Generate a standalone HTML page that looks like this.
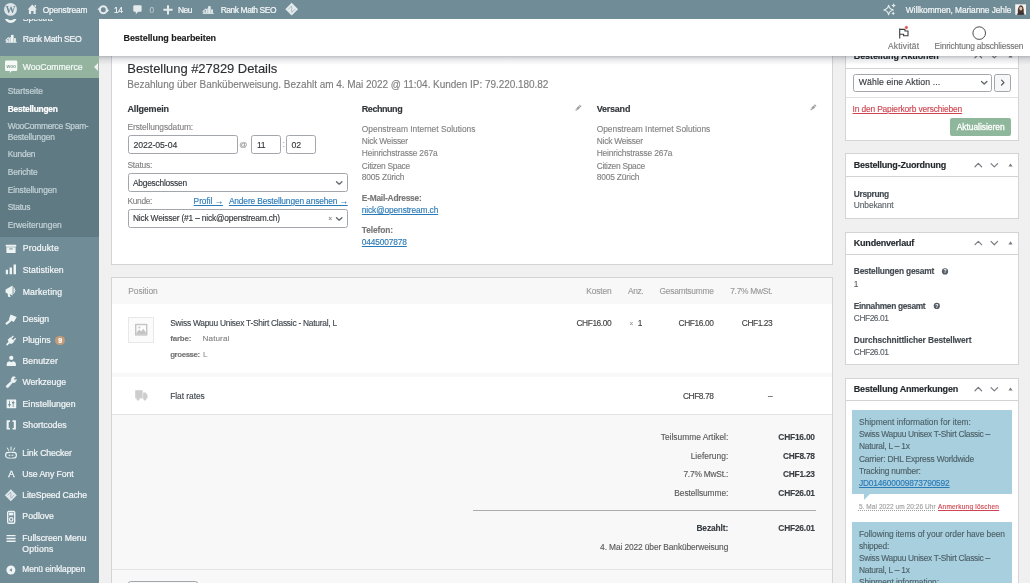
<!DOCTYPE html>
<html lang="de">
<head>
<meta charset="utf-8">
<title>Bestellung bearbeiten ‹ Openstream — WordPress</title>
<style>
*{box-sizing:border-box;margin:0;padding:0}
html,body{width:1030px;height:583px;overflow:hidden}
body{position:relative;background:#f0f0f1;font-family:"Liberation Sans","DejaVu Sans",sans-serif;font-size:8px}
.t{position:absolute;white-space:nowrap;line-height:1;display:block;-webkit-text-stroke:.13px currentColor}
.a{position:absolute;display:block}
#content{position:absolute;left:0;top:0;width:1030px;height:583px;overflow:hidden;z-index:1;will-change:transform}
#sidebar{position:absolute;left:0;top:0;width:99px;height:583px;background:#708c97;overflow:hidden;z-index:2;will-change:transform}
#header{position:absolute;left:99px;top:19px;width:931px;height:37px;background:#fff;z-index:3;box-shadow:0 1px 2px rgba(20,30,40,.10)}
#hshadow{position:absolute;left:99px;top:56px;width:931px;height:9px;z-index:3;background:linear-gradient(rgba(25,35,50,.21),rgba(25,35,50,.09) 45%,rgba(25,35,50,0));pointer-events:none}
#adminbar{position:absolute;left:0;top:0;width:1030px;height:19px;background:#708c97;z-index:4}
#header .t,#header .a{margin-left:-99px;margin-top:-19px}
.panel{position:absolute;background:#fff;border:1px solid #d3d4d6}
.box{position:absolute;background:#fff;border:1px solid #d3d4d6}
.box .hb{position:absolute;left:0;right:0;height:1px;background:#d2d3d5}
.inp{position:absolute;background:#fff;border:1px solid #a3a6aa;border-radius:2.5px}
svg{position:absolute;overflow:visible}
#sidebar .t,#adminbar .t{-webkit-text-stroke:.22px currentColor}
</style>
</head>
<body>

<div id="content">
  <!-- order data panel -->
  <div class="panel" style="left:111px;top:40px;width:722px;height:224.5px"></div>
  <!-- form controls -->
  <div class="inp" style="left:127.5px;top:135.4px;width:110px;height:18.6px"></div>
  <div class="inp" style="left:251px;top:135.4px;width:29.5px;height:18.6px"></div>
  <div class="inp" style="left:286.2px;top:135.4px;width:30.3px;height:18.6px"></div>
  <div class="inp" style="left:127.5px;top:173.2px;width:220.2px;height:18.6px"></div>
  <div class="inp" style="left:127.5px;top:209.2px;width:220.2px;height:18.6px"></div>

  <!-- order items panel -->
  <div class="panel" style="left:111px;top:277px;width:722px;height:320px;background:#f8f8f8"></div>
  <div class="a" style="left:112px;top:304px;width:720px;height:68.5px;background:#fff"></div>
  <div class="a" style="left:112px;top:377px;width:720px;height:37px;background:#fff"></div>
  <div class="a" style="left:112px;top:414px;width:720px;height:1px;background:#e3e3e3"></div>
  <div class="a" style="left:112px;top:568.5px;width:720px;height:1px;background:#e3e3e3"></div>
  <div class="a" style="left:473px;top:509.6px;width:343px;height:1px;background:#ababab"></div>
  <div class="a" style="left:128.4px;top:581px;width:69.4px;height:18px;border:1px solid #a3a6aa;border-radius:2.5px;background:#f6f7f7"></div>
  <!-- thumbnail -->
  <div class="a" style="left:128.3px;top:317px;width:25.8px;height:25.8px;border:1px solid #e8e8e8;background:#fbfbfb"></div>

  <!-- right column boxes -->
  <div class="box" style="left:845.2px;top:45.3px;width:173.4px;height:95.6px">
    <div class="hb" style="top:22px"></div>
    <div class="hb" style="top:50.5px;background:#e2e2e2"></div>
  </div>
  <div class="inp" style="left:852.8px;top:73.6px;width:139px;height:18px"></div>
  <div class="inp" style="left:994.3px;top:73.6px;width:17px;height:18px;background:#f6f7f7"></div>
  <div class="a" style="left:949.5px;top:118px;width:61.8px;height:17.8px;border-radius:2px;background:#8fb79c"></div>

  <div class="box" style="left:845.2px;top:153.4px;width:173.4px;height:65.4px"><div class="hb" style="top:22px"></div></div>
  <div class="box" style="left:845.2px;top:231.8px;width:173.4px;height:133.2px"><div class="hb" style="top:21.5px"></div></div>
  <div class="box" style="left:845.2px;top:378px;width:173.4px;height:220px"><div class="hb" style="top:21.2px"></div></div>
  <!-- notes -->
  <div class="a" style="left:852.3px;top:410px;width:159.5px;height:84.2px;background:#a8cfde"></div>
  <div class="a" style="left:864px;top:494.2px;width:0;height:0;border-top:6px solid #a8cfde;border-right:6px solid transparent"></div>
  <div class="a" style="left:852.3px;top:522.4px;width:159.5px;height:70px;background:#a8cfde"></div>

<svg class="a" style="left:0;top:0" width="1030" height="583" viewBox="0 0 1030 583"><g transform="translate(578.2 108) rotate(45)" fill="#9d9d9d"><rect x="-1.15" y="-3.5" width="2.3" height="1.3"/><rect x="-1.15" y="-1.7" width="2.3" height="3.4"/><path d="M-1.15 2.1 H1.15 L0 3.9Z"/></g><g transform="translate(813.2 107.6) rotate(45)" fill="#9d9d9d"><rect x="-1.15" y="-3.5" width="2.3" height="1.3"/><rect x="-1.15" y="-1.7" width="2.3" height="3.4"/><path d="M-1.15 2.1 H1.15 L0 3.9Z"/></g><path d="M336.50 181.65 L339.20 184.15 L341.90 181.65" fill="none" stroke="#62686e" stroke-width="1.35" stroke-linecap="round" stroke-linejoin="round"/><path d="M336.50 217.65 L339.20 220.15 L341.90 217.65" fill="none" stroke="#62686e" stroke-width="1.35" stroke-linecap="round" stroke-linejoin="round"/><path d="M981.50 81.55 L984.20 84.05 L986.90 81.55" fill="none" stroke="#62686e" stroke-width="1.35" stroke-linecap="round" stroke-linejoin="round"/><path d="M1001.6 80.2 L1004 82.6 L1001.6 85" fill="none" stroke="#50575e" stroke-width="1.2" stroke-linecap="round" stroke-linejoin="round"/><path d="M975.00 57.75 L978.30 54.45 L981.60 57.75" fill="none" stroke="#787c82" stroke-width="1.2" stroke-linecap="round" stroke-linejoin="round"/><path d="M991.00 54.55 L994.30 57.85 L997.60 54.55" fill="none" stroke="#787c82" stroke-width="1.2" stroke-linecap="round" stroke-linejoin="round"/><path d="M1008.4 57.6 L1010.5 54.4 L1012.6 57.6Z" fill="#787c82"/><path d="M975.00 166.75 L978.30 163.45 L981.60 166.75" fill="none" stroke="#787c82" stroke-width="1.2" stroke-linecap="round" stroke-linejoin="round"/><path d="M991.00 163.55 L994.30 166.85 L997.60 163.55" fill="none" stroke="#787c82" stroke-width="1.2" stroke-linecap="round" stroke-linejoin="round"/><path d="M1008.4 166.6 L1010.5 163.4 L1012.6 166.6Z" fill="#787c82"/><path d="M975.00 244.65 L978.30 241.35 L981.60 244.65" fill="none" stroke="#787c82" stroke-width="1.2" stroke-linecap="round" stroke-linejoin="round"/><path d="M991.00 241.45 L994.30 244.75 L997.60 241.45" fill="none" stroke="#787c82" stroke-width="1.2" stroke-linecap="round" stroke-linejoin="round"/><path d="M1008.4 244.5 L1010.5 241.3 L1012.6 244.5Z" fill="#787c82"/><path d="M975.00 390.75 L978.30 387.45 L981.60 390.75" fill="none" stroke="#787c82" stroke-width="1.2" stroke-linecap="round" stroke-linejoin="round"/><path d="M991.00 387.55 L994.30 390.85 L997.60 387.55" fill="none" stroke="#787c82" stroke-width="1.2" stroke-linecap="round" stroke-linejoin="round"/><path d="M1008.4 390.6 L1010.5 387.4 L1012.6 390.6Z" fill="#787c82"/><circle cx="945" cy="271.4" r="3.1" fill="#555d66"/><text x="945" y="273.29999999999995" text-anchor="middle" font-family="Liberation Sans,sans-serif" font-weight="700" font-size="5.2" fill="#fff">?</text><circle cx="936.8" cy="305.9" r="3.1" fill="#555d66"/><text x="936.8" y="307.79999999999995" text-anchor="middle" font-family="Liberation Sans,sans-serif" font-weight="700" font-size="5.2" fill="#fff">?</text><rect x="135.7" y="324.5" width="11" height="10.4" fill="none" stroke="#c4c4c4" stroke-width="1.4"/><path d="M136.6 334 V332.4 L139.3 329.4 L141.2 331.4 L143.2 328.8 L145.9 332.4 V334Z" fill="#c4c4c4"/><circle cx="139.3" cy="327.4" r="1" fill="#c4c4c4"/><g fill="#cdcdcd"><rect x="135.2" y="390.2" width="7.4" height="8.2"/><path d="M143.1 392.4 H145.6 L147.5 395 V398.4 H143.1Z"/><circle cx="138" cy="398.9" r="1.5"/><circle cx="144.9" cy="398.9" r="1.5"/></g></svg>
<span class="t" style="top:62px;font-size:13px;color:#2b2f33;letter-spacing:-0.043px;left:127.30px;">Bestellung #27829 Details</span>
<span class="t" style="top:80px;font-size:10px;color:#7d7d7d;letter-spacing:-0.042px;left:127.30px;">Bezahlung über Banküberweisung. Bezahlt am 4. Mai 2022 @ 11:04. Kunden IP: 79.220.180.82</span>
<span class="t" style="top:105px;font-size:9px;color:#33373b;font-weight:700;letter-spacing:-0.180px;left:127.50px;">Allgemein</span>
<span class="t" style="top:123px;font-size:8.4px;color:#838383;letter-spacing:-0.085px;left:127.50px;">Erstellungsdatum:</span>
<span class="t" style="top:141px;font-size:8.7px;color:#33373b;letter-spacing:-0.065px;left:133.40px;">2022-05-04</span>
<span class="t" style="top:141px;font-size:7.9px;color:#909090;left:239.20px;">@</span>
<span class="t" style="top:141px;font-size:8.7px;color:#33373b;letter-spacing:-0.416px;left:256.90px;">11</span>
<span class="t" style="top:140px;font-size:8.4px;color:#a6a6a6;left:282.40px;">:</span>
<span class="t" style="top:141px;font-size:8.7px;color:#33373b;letter-spacing:-0.186px;left:291.60px;">02</span>
<span class="t" style="top:161px;font-size:8.4px;color:#838383;letter-spacing:-0.225px;left:127.50px;">Status:</span>
<span class="t" style="top:179px;font-size:8.4px;color:#33373b;letter-spacing:-0.216px;left:132.90px;">Abgeschlossen</span>
<span class="t" style="top:197px;font-size:8.4px;color:#838383;letter-spacing:-0.341px;left:127.50px;">Kunde:</span>
<span class="t" style="top:197px;font-size:8.4px;color:#2a7ab8;text-decoration:underline;letter-spacing:-0.050px;left:193.60px;">Profil →</span>
<span class="t" style="top:197px;font-size:8.4px;color:#2a7ab8;text-decoration:underline;letter-spacing:-0.143px;left:228.90px;">Andere Bestellungen ansehen →</span>
<span class="t" style="top:214px;font-size:8.4px;color:#33373b;letter-spacing:-0.188px;left:132.90px;">Nick Weisser (#1 – nick@openstream.ch)</span>
<span class="t" style="top:215px;font-size:7px;color:#8a8a8a;left:328.20px;">×</span>
<span class="t" style="top:105px;font-size:9px;color:#33373b;font-weight:700;letter-spacing:-0.450px;left:361.80px;">Rechnung</span>
<span class="t" style="top:105px;font-size:9px;color:#33373b;font-weight:700;letter-spacing:-0.219px;left:596.70px;">Versand</span>
<span class="t" style="top:125px;font-size:8.4px;color:#838383;left:361.80px;">Openstream Internet Solutions</span>
<span class="t" style="top:137px;font-size:8.4px;color:#838383;letter-spacing:-0.218px;left:361.80px;">Nick Weisser</span>
<span class="t" style="top:149px;font-size:8.4px;color:#838383;letter-spacing:-0.154px;left:361.80px;">Heinrichstrasse 267a</span>
<span class="t" style="top:162px;font-size:8.4px;color:#838383;letter-spacing:-0.276px;left:361.80px;">Citizen Space</span>
<span class="t" style="top:173px;font-size:8.4px;color:#838383;letter-spacing:-0.158px;left:361.80px;">8005 Zürich</span>
<span class="t" style="top:125px;font-size:8.4px;color:#838383;left:596.70px;">Openstream Internet Solutions</span>
<span class="t" style="top:137px;font-size:8.4px;color:#838383;letter-spacing:-0.218px;left:596.70px;">Nick Weisser</span>
<span class="t" style="top:149px;font-size:8.4px;color:#838383;letter-spacing:-0.154px;left:596.70px;">Heinrichstrasse 267a</span>
<span class="t" style="top:162px;font-size:8.4px;color:#838383;letter-spacing:-0.276px;left:596.70px;">Citizen Space</span>
<span class="t" style="top:173px;font-size:8.4px;color:#838383;letter-spacing:-0.158px;left:596.70px;">8005 Zürich</span>
<span class="t" style="top:194px;font-size:8.4px;color:#777;font-weight:700;letter-spacing:-0.240px;left:361.80px;">E-Mail-Adresse:</span>
<span class="t" style="top:206px;font-size:8.4px;color:#2a7ab8;text-decoration:underline;letter-spacing:-0.133px;left:361.80px;">nick@openstream.ch</span>
<span class="t" style="top:226px;font-size:8.4px;color:#777;font-weight:700;letter-spacing:-0.094px;left:361.80px;">Telefon:</span>
<span class="t" style="top:238px;font-size:8.4px;color:#2a7ab8;text-decoration:underline;letter-spacing:-0.158px;left:361.80px;">0445007878</span>
<span class="t" style="top:287px;font-size:8.4px;color:#9a9a9a;letter-spacing:-0.062px;left:128.30px;">Position</span>
<span class="t" style="top:287px;font-size:8.4px;color:#9a9a9a;letter-spacing:-0.146px;right:418.55px;">Kosten</span>
<span class="t" style="top:287px;font-size:8.4px;color:#9a9a9a;letter-spacing:-0.391px;left:628.00px;">Anz.</span>
<span class="t" style="top:287px;font-size:8.4px;color:#9a9a9a;letter-spacing:-0.253px;right:316.45px;">Gesamtsumme</span>
<span class="t" style="top:287px;font-size:8.4px;color:#9a9a9a;letter-spacing:-0.249px;right:257.65px;">7.7% MwSt.</span>
<span class="t" style="top:319px;font-size:8.4px;color:#3f464c;letter-spacing:-0.246px;left:170.20px;">Swiss Wapuu Unisex T-Shirt Classic - Natural, L</span>
<span class="t" style="top:335px;font-size:7.9px;color:#767676;font-weight:700;letter-spacing:-0.140px;left:170.20px;">farbe:</span>
<span class="t" style="top:335px;font-size:8.1px;color:#858585;letter-spacing:0.101px;left:202.60px;">Natural</span>
<span class="t" style="top:351px;font-size:7.9px;color:#767676;font-weight:700;letter-spacing:-0.413px;left:170.20px;">groesse:</span>
<span class="t" style="top:351px;font-size:8.1px;color:#999;left:202.90px;">L</span>
<span class="t" style="top:319px;font-size:8.4px;color:#444;letter-spacing:-0.434px;right:418.83px;">CHF16.00</span>
<span class="t" style="top:321px;font-size:6.5px;color:#999;left:629.60px;">×</span>
<span class="t" style="top:319px;font-size:8.4px;color:#444;left:637.80px;">1</span>
<span class="t" style="top:319px;font-size:8.4px;color:#444;letter-spacing:-0.421px;right:316.62px;">CHF16.00</span>
<span class="t" style="top:319px;font-size:8.4px;color:#444;letter-spacing:-0.450px;right:257.85px;">CHF1.23</span>
<span class="t" style="top:392px;font-size:8.4px;color:#3f464c;letter-spacing:-0.042px;left:170.20px;">Flat rates</span>
<span class="t" style="top:392px;font-size:8.4px;color:#444;letter-spacing:-0.450px;right:316.65px;">CHF8.78</span>
<span class="t" style="top:392px;font-size:8.4px;color:#666;right:257.40px;">–</span>
<span class="t" style="top:433px;font-size:8.4px;color:#5a5a5a;letter-spacing:0.006px;right:301.69px;">Teilsumme Artikel:</span>
<span class="t" style="top:452px;font-size:8.4px;color:#5a5a5a;letter-spacing:0.045px;right:301.66px;">Lieferung:</span>
<span class="t" style="top:470px;font-size:8.4px;color:#5a5a5a;letter-spacing:-0.211px;right:301.91px;">7.7% MwSt.:</span>
<span class="t" style="top:489px;font-size:8.4px;color:#5a5a5a;letter-spacing:-0.079px;right:301.78px;">Bestellsumme:</span>
<span class="t" style="top:524px;font-size:8.4px;color:#3a3f44;font-weight:700;letter-spacing:-0.097px;right:301.80px;">Bezahlt:</span>
<span class="t" style="top:543px;font-size:8.4px;color:#5a5a5a;letter-spacing:-0.115px;right:301.81px;">4. Mai 2022 über Banküberweisung</span>
<span class="t" style="top:433px;font-size:8.4px;color:#3a3f44;font-weight:700;letter-spacing:-0.209px;right:215.21px;">CHF16.00</span>
<span class="t" style="top:452px;font-size:8.4px;color:#3a3f44;font-weight:700;letter-spacing:-0.245px;right:215.25px;">CHF8.78</span>
<span class="t" style="top:470px;font-size:8.4px;color:#3a3f44;font-weight:700;letter-spacing:-0.245px;right:215.25px;">CHF1.23</span>
<span class="t" style="top:489px;font-size:8.4px;color:#3a3f44;font-weight:700;letter-spacing:-0.209px;right:215.21px;">CHF26.01</span>
<span class="t" style="top:524px;font-size:8.4px;color:#3a3f44;font-weight:700;letter-spacing:-0.209px;right:215.21px;">CHF26.01</span>
<span class="t" style="top:52px;font-size:9px;color:#23282d;font-weight:700;letter-spacing:-0.089px;left:853.80px;">Bestellung Aktionen</span>
<span class="t" style="top:78px;font-size:8.7px;color:#33373b;letter-spacing:0.114px;left:858.70px;">Wähle eine Aktion ...</span>
<span class="t" style="top:105px;font-size:8.4px;color:#cf4450;text-decoration:underline;letter-spacing:-0.138px;left:852.50px;">In den Papierkorb verschieben</span>
<span class="t" style="top:123px;font-size:8.4px;color:#ffffff;letter-spacing:-0.004px;left:956.70px;-webkit-text-stroke:.3px #fff;">Aktualisieren</span>
<span class="t" style="top:161px;font-size:9px;color:#23282d;font-weight:700;letter-spacing:-0.215px;left:853.80px;">Bestellung-Zuordnung</span>
<span class="t" style="top:190px;font-size:8.4px;color:#444b52;font-weight:700;letter-spacing:-0.336px;left:853.80px;">Ursprung</span>
<span class="t" style="top:201px;font-size:8.4px;color:#5b6269;letter-spacing:-0.091px;left:853.80px;">Unbekannt</span>
<span class="t" style="top:239px;font-size:9px;color:#23282d;font-weight:700;letter-spacing:-0.217px;left:853.80px;">Kundenverlauf</span>
<span class="t" style="top:267px;font-size:8.4px;color:#444b52;font-weight:700;letter-spacing:-0.208px;left:853.80px;">Bestellungen gesamt</span>
<span class="t" style="top:280px;font-size:8.4px;color:#5b6269;left:853.80px;">1</span>
<span class="t" style="top:302px;font-size:8.4px;color:#444b52;font-weight:700;letter-spacing:-0.331px;left:853.80px;">Einnahmen gesamt</span>
<span class="t" style="top:314px;font-size:8.4px;color:#5b6269;letter-spacing:-0.450px;left:853.80px;">CHF26.01</span>
<span class="t" style="top:336px;font-size:8.4px;color:#444b52;font-weight:700;letter-spacing:-0.114px;left:853.80px;">Durchschnittlicher Bestellwert</span>
<span class="t" style="top:348px;font-size:8.4px;color:#5b6269;letter-spacing:-0.450px;left:853.80px;">CHF26.01</span>
<span class="t" style="top:385px;font-size:9px;color:#23282d;font-weight:700;letter-spacing:-0.204px;left:853.80px;">Bestellung Anmerkungen</span>
<span class="t" style="top:418px;font-size:8.4px;color:#4d6068;letter-spacing:0.009px;left:858.90px;">Shipment information for item:</span>
<span class="t" style="top:430px;font-size:8.4px;color:#4d6068;letter-spacing:-0.294px;left:858.90px;">Swiss Wapuu Unisex T-Shirt Classic –</span>
<span class="t" style="top:442px;font-size:8.4px;color:#4d6068;letter-spacing:-0.224px;left:858.90px;">Natural, L – 1x</span>
<span class="t" style="top:455px;font-size:8.4px;color:#4d6068;letter-spacing:-0.182px;left:858.90px;">Carrier: DHL Express Worldwide</span>
<span class="t" style="top:467px;font-size:8.4px;color:#4d6068;letter-spacing:-0.191px;left:858.90px;">Tracking number:</span>
<span class="t" style="top:479px;font-size:8.4px;color:#2a7ab8;text-decoration:underline;letter-spacing:-0.169px;left:858.90px;">JD014600009873790592</span>
<span class="t" style="top:504px;font-size:6.5px;color:#a0a0a0;letter-spacing:0.073px;left:858.90px;text-decoration:underline dotted;">5. Mai 2022 um 20:26 Uhr</span>
<span class="t" style="top:504px;font-size:6.5px;color:#cf4450;text-decoration:underline;letter-spacing:0.220px;left:938.00px;">Anmerkung löschen</span>
<span class="t" style="top:530px;font-size:8.4px;color:#4d6068;letter-spacing:-0.076px;left:858.90px;">Following items of your order have been</span>
<span class="t" style="top:542px;font-size:8.4px;color:#4d6068;letter-spacing:-0.159px;left:858.90px;">shipped:</span>
<span class="t" style="top:554px;font-size:8.4px;color:#4d6068;letter-spacing:-0.294px;left:858.90px;">Swiss Wapuu Unisex T-Shirt Classic –</span>
<span class="t" style="top:566px;font-size:8.4px;color:#4d6068;letter-spacing:-0.224px;left:858.90px;">Natural, L – 1x</span>
<span class="t" style="top:578px;font-size:8.4px;color:#4d6068;letter-spacing:-0.070px;left:858.90px;">Shipment information:</span>
</div>

<div id="sidebar">
  <div class="a" style="left:0;top:56.2px;width:99px;height:21.6px;background:#95b4a0"></div>
  <div class="a" style="left:0;top:77.8px;width:99px;height:159.2px;background:#5f7a83"></div>
  <div class="a" style="left:94.4px;top:62.8px;width:0;height:0;border-right:4.7px solid #f0f0f1;border-top:4.7px solid transparent;border-bottom:4.7px solid transparent"></div>
  <div class="a" style="left:55.4px;top:335.6px;width:9.2px;height:9.2px;border-radius:5px;background:#c39b78"></div>
<svg class="a" style="left:0;top:0" width="1030" height="583" viewBox="0 0 1030 583"><circle cx="10.7" cy="16.6" r="5" fill="none" stroke="#eef3f4" stroke-width="2.6"/><g fill="#eef3f4"><rect x="6.10" y="39.90" width="2.1" height="2.4" opacity=".85"/><rect x="8.50" y="38.40" width="2.2" height="3.9" opacity=".9"/><rect x="11.00" y="34.90" width="2.6" height="7.4"/><rect x="13.90" y="38.10" width="2.0" height="4.2" opacity=".9"/><path d="M5.30 39.90 L8.30 37.10 L9.70 38.00 L11.00 36.50 V37.90 L9.80 39.30 L8.40 38.40 L5.70 40.90Z" opacity=".9"/><rect x="5.50" y="41.80" width="11.3" height="0.95" opacity=".8"/></g><path d="M6.3 60.5 H16 Q17.3 60.5 17.3 61.8 V69.7 Q17.3 71 16 71 H11.8 L9.6 72.9 L9.9 71 H6.3 Q5 71 5 69.7 V61.8 Q5 60.5 6.3 60.5Z" fill="#f5faf6"/><text x="11.15" y="67.6" text-anchor="middle" font-family="Liberation Sans,sans-serif" font-weight="700" font-size="5" fill="#8aa596" letter-spacing="-.2">woo</text><path d="M5.8 244.7 H16.2 V246.7 H5.8Z M6.4 247.3 H15.6 V252.9 H6.4Z" fill="#eef3f4"/><rect x="9.2" y="248.5" width="3.6" height=".9" fill="#708c97"/><path d="M5.8 269.8 h2.2 v4.4 h-2.2z M9.6 267.4 h2.4 v6.8 h-2.4z M13.5 264.6 h2.5 v9.6 h-2.5z" fill="#eef3f4"/><path d="M5.6 289.4 L12.6 285.6 V295.4 L9.6 293.9 L10.6 297 H8.4 L7.4 293.2 L5.6 292.8Z" fill="#eef3f4"/><path d="M13.6 287.4 Q16.4 290.5 13.6 293.6" fill="none" stroke="#eef3f4" stroke-width="1"/><path d="M13.4 289.3 Q14.4 290.5 13.4 291.7" fill="none" stroke="#eef3f4" stroke-width=".9"/><path d="M10.6 314.6 L16.7 317.1 L13.8 322 L8.8 319.6Z" fill="#eef3f4"/><path d="M10.2 320.6 L6.6 323.6" stroke="#eef3f4" stroke-width="2.2" stroke-linecap="round"/><g transform="translate(11 340.7) rotate(-45)" fill="#eef3f4"><path d="M-1 -2.9 H2 V2.9 H-1 Q-3.2 1.6 -3.2 0 Q-3.2 -1.6 -1 -2.9Z"/><rect x="2" y="-2.3" width="2.9" height="1.4"/><rect x="2" y="0.9" width="2.9" height="1.4"/><rect x="-6.2" y="-0.85" width="3.6" height="1.7" rx=".6"/></g><circle cx="11.3" cy="357.9" r="2.15" fill="#eef3f4"/><path d="M6.7 366.1 V363.8 Q6.9 361.6 9.5 361.2 L11.3 362.2 L13.1 361.2 Q15.7 361.6 15.9 363.8 V366.1Z" fill="#eef3f4"/><g transform="translate(11.2 382.1) scale(.9) translate(-11.5 -382.3)"><path d="M13.4 376.4 Q15 376 16.2 376.8 L14.4 378.6 L14.8 380 L16.2 380.4 L17 379 Q17.4 381.2 15.8 382.4 Q14.6 383.2 13 382.8 L8.4 388 Q7.2 388.9 6.3 388 Q5.5 387.1 6.4 386 L11.6 381.4 Q11.2 379.6 12 378 Q12.6 376.8 13.4 376.4Z" fill="#eef3f4" stroke="#eef3f4" stroke-width=".7" stroke-linejoin="round"/></g><rect x="6.6" y="399.4" width="9.6" height="8.9" rx=".6" fill="#eef3f4"/><path d="M9.5 400.8 V407 M13.2 400.8 V407" stroke="#708c97" stroke-width=".8"/><rect x="8.3" y="404" width="2.4" height="1.4" fill="#708c97"/><rect x="12" y="402" width="2.4" height="1.4" fill="#708c97"/><path d="M6.6 420.3 H10 V421.9 H8.7 V428 H10 V429.6 H6.6Z M15.9 420.3 H12.5 V421.9 H13.8 V428 H12.5 V429.6 H15.9Z" fill="#eef3f4"/><rect x="5.6" y="452.4" width="10.8" height="5.6" rx="2.8" fill="none" stroke="#eef3f4" stroke-width="1.2"/><path d="M8.6 455.2 H13.4" stroke="#eef3f4" stroke-width="1.1"/><path d="M11 452.4 V458" stroke="#708c97" stroke-width="1.2"/><path d="M11 447 V450 M7.4 448 L8.6 450.4 M14.6 448 L13.4 450.4" stroke="#eef3f4" stroke-width="1" stroke-linecap="round"/><text x="11.3" y="477" text-anchor="middle" font-family="Liberation Sans,sans-serif" font-size="9.4" fill="#eef3f4" stroke="#eef3f4" stroke-width=".35">A</text><path d="M10.8 489.2 L16.8 495.2 L10.8 501.2 L4.800000000000001 495.2Z" fill="#dfe7ea"/><path d="M7.50 495.40 L10.60 492.20 L11.10 495.30 M14.10 495.00 L11.00 498.20 L10.50 495.10" fill="none" stroke="#708c97" stroke-width=".85" stroke-linejoin="round" opacity=".55"/><rect x="7.7" y="511.4" width="7" height="11.8" rx="1.2" fill="none" stroke="#eef3f4" stroke-width="1.4"/><rect x="9" y="512.6" width="4.4" height="2.8" fill="#eef3f4"/><circle cx="11.2" cy="519.4" r="1.7" fill="none" stroke="#eef3f4" stroke-width="1.2"/><path d="M6.5 535.6 H15.6 M6.5 538.4 H15.6 M6.5 541.2 H15.6" stroke="#eef3f4" stroke-width="1.45"/><circle cx="10.9" cy="570" r="4.5" fill="#eef3f4"/><path d="M11.9 568.3 V571.7 L9.4 570Z" fill="#708c97"/></svg>
<span class="t" style="top:14px;font-size:8.7px;color:#f3f6f7;left:22.70px;">Spectra</span>
<span class="t" style="top:35px;font-size:8.7px;color:#f3f6f7;letter-spacing:-0.306px;left:22.70px;">Rank Math SEO</span>
<span class="t" style="top:63px;font-size:8.7px;color:#f4faf6;letter-spacing:-0.026px;left:22.70px;">WooCommerce</span>
<span class="t" style="top:87px;font-size:8.4px;color:#c3d2d7;letter-spacing:-0.019px;left:7.70px;">Startseite</span>
<span class="t" style="top:105px;font-size:8.4px;color:#ffffff;font-weight:700;letter-spacing:-0.216px;left:7.70px;">Bestellungen</span>
<span class="t" style="top:122px;font-size:8.4px;color:#c3d2d7;letter-spacing:-0.254px;left:7.70px;">WooCommerce Spam-</span>
<span class="t" style="top:133px;font-size:8.4px;color:#c3d2d7;letter-spacing:-0.111px;left:7.70px;">Bestellungen</span>
<span class="t" style="top:150px;font-size:8.4px;color:#c3d2d7;letter-spacing:-0.212px;left:7.70px;">Kunden</span>
<span class="t" style="top:168px;font-size:8.4px;color:#c3d2d7;letter-spacing:-0.092px;left:7.70px;">Berichte</span>
<span class="t" style="top:186px;font-size:8.4px;color:#c3d2d7;letter-spacing:-0.084px;left:7.70px;">Einstellungen</span>
<span class="t" style="top:203px;font-size:8.4px;color:#c3d2d7;letter-spacing:-0.208px;left:7.70px;">Status</span>
<span class="t" style="top:221px;font-size:8.4px;color:#c3d2d7;left:7.70px;">Erweiterungen</span>
<span class="t" style="top:244px;font-size:8.7px;color:#f3f6f7;letter-spacing:0.190px;left:22.70px;">Produkte</span>
<span class="t" style="top:266px;font-size:8.7px;color:#f3f6f7;letter-spacing:0.093px;left:22.70px;">Statistiken</span>
<span class="t" style="top:288px;font-size:8.7px;color:#f3f6f7;letter-spacing:0.149px;left:22.70px;">Marketing</span>
<span class="t" style="top:315px;font-size:8.7px;color:#f3f6f7;letter-spacing:-0.074px;left:22.50px;">Design</span>
<span class="t" style="top:336px;font-size:8.7px;color:#f3f6f7;letter-spacing:-0.071px;left:22.50px;">Plugins</span>
<span class="t" style="top:337px;font-size:7px;color:#ffffff;font-weight:700;left:60.10px;transform:translateX(-50%);">9</span>
<span class="t" style="top:357px;font-size:8.7px;color:#f3f6f7;letter-spacing:0.077px;left:22.50px;">Benutzer</span>
<span class="t" style="top:378px;font-size:8.7px;color:#f3f6f7;letter-spacing:-0.031px;left:22.50px;">Werkzeuge</span>
<span class="t" style="top:400px;font-size:8.7px;color:#f3f6f7;letter-spacing:0.079px;left:22.50px;">Einstellungen</span>
<span class="t" style="top:421px;font-size:8.7px;color:#f3f6f7;letter-spacing:0.025px;left:22.50px;">Shortcodes</span>
<span class="t" style="top:449px;font-size:8.7px;color:#f3f6f7;letter-spacing:-0.100px;left:22.30px;">Link Checker</span>
<span class="t" style="top:470px;font-size:8.7px;color:#f3f6f7;letter-spacing:-0.071px;left:22.30px;">Use Any Font</span>
<span class="t" style="top:491px;font-size:8.7px;color:#f3f6f7;letter-spacing:-0.130px;left:22.30px;">LiteSpeed Cache</span>
<span class="t" style="top:512px;font-size:8.7px;color:#f3f6f7;letter-spacing:0.042px;left:22.30px;">Podlove</span>
<span class="t" style="top:534px;font-size:8.7px;color:#f3f6f7;left:22.30px;">Fullscreen Menu</span>
<span class="t" style="top:545px;font-size:8.7px;color:#f3f6f7;letter-spacing:0.178px;left:22.30px;">Options</span>
<span class="t" style="top:565px;font-size:8.4px;color:#f3f6f7;letter-spacing:-0.073px;left:22.30px;">Menü einklappen</span>
</div>

<div id="hshadow"></div>
<div id="header">
<svg class="a" style="left:0;top:0" width="1030" height="583" viewBox="0 0 1030 583"><path d="M899.7 28.4 V38.4" stroke="#3c3c3c" stroke-width="1.1" fill="none"/><path d="M899.7 29.4 H905 V31 H908 V35.8 H903.6 V34.3 H899.7" stroke="#3c3c3c" stroke-width="1.1" fill="none" stroke-linejoin="miter"/><circle cx="906.4" cy="27.5" r="1.7" fill="#dc4a4a" stroke="#fff" stroke-width=".5"/><circle cx="979.2" cy="33.1" r="6.3" fill="none" stroke="#4a4a4a" stroke-width="1"/></svg>
<span class="t" style="top:34px;font-size:9px;color:#1e1e1e;font-weight:700;letter-spacing:-0.073px;left:123.50px;">Bestellung bearbeiten</span>
<span class="t" style="top:42px;font-size:8.4px;color:#757575;letter-spacing:0.230px;left:903.62px;transform:translateX(-50%);">Aktivität</span>
<span class="t" style="top:42px;font-size:8.4px;color:#757575;letter-spacing:-0.165px;left:934.60px;">Einrichtung abschliessen</span>
</div>

<div id="adminbar">
<svg class="a" style="left:0;top:0" width="1030" height="583" viewBox="0 0 1030 583"><circle cx="10.5" cy="9.4" r="6.4" fill="#dde5e8"/><text x="10.5" y="12.9" text-anchor="middle" font-family="Liberation Serif,serif" font-weight="700" font-size="10" fill="#708c97">W</text><path d="M32.3 4.6 L37 9.4 H35.7 V14.1 H33.5 V11.1 H31.1 V14.1 H28.9 V9.4 H27.6Z M34.6 5 h1.4 v2.6 l-1.4-1.4z" fill="#e4ebed"/><circle cx="103.3" cy="9.7" r="3.5" fill="none" stroke="#e4ebed" stroke-width="2"/><path d="M105.4 9.7 L109.2 9.7 L107.3 12.2Z M101.2 9.7 L97.4 9.7 L99.3 7.2Z" fill="#e4ebed"/><path d="M107.2 6.6 L109 8.8 M99.4 12.8 L97.6 10.6" stroke="#708c97" stroke-width=".9"/><path d="M134.3 5.3 H140.6 Q141.6 5.3 141.6 6.3 V10.8 Q141.6 11.8 140.6 11.8 H138.2 L135.8 14.2 V11.8 H134.3 Q133.3 11.8 133.3 10.8 V6.3 Q133.3 5.3 134.3 5.3Z" fill="#e4ebed"/><path d="M167 5.2 h2 v3.6 h3.6 v2 h-3.6 v3.6 h-2 v-3.6 h-3.6 v-2 h3.6z" fill="#e4ebed"/><g fill="#e4ebed"><rect x="203.20" y="11.20" width="2.1" height="2.4" opacity=".85"/><rect x="205.60" y="9.70" width="2.2" height="3.9" opacity=".9"/><rect x="208.10" y="6.20" width="2.6" height="7.4"/><rect x="211.00" y="9.40" width="2.0" height="4.2" opacity=".9"/><path d="M202.40 11.20 L205.40 8.40 L206.80 9.30 L208.10 7.80 V9.20 L206.90 10.60 L205.50 9.70 L202.80 12.20Z" opacity=".9"/><rect x="202.60" y="13.10" width="11.3" height="0.95" opacity=".8"/></g><path d="M291.7 2.799999999999999 L298.09999999999997 9.2 L291.7 15.6 L285.3 9.2Z" fill="#e4ebed"/><path d="M288.18 9.40 L291.50 6.00 L292.00 9.30 M295.22 9.00 L291.90 12.40 L291.40 9.10" fill="none" stroke="#708c97" stroke-width=".85" stroke-linejoin="round" opacity=".55"/><path d="M888.6 5.2 Q889.3 9.2 893.4 10 Q889.3 10.8 888.6 14.8 Q887.9 10.8 883.8 10 Q887.9 9.2 888.6 5.2Z" fill="none" stroke="#e4ebed" stroke-width="1.1" stroke-linejoin="round"/><path d="M893.6 3.2 Q893.9 5.2 895.9 5.5 Q893.9 5.8 893.6 7.8 Q893.3 5.8 891.3 5.5 Q893.3 5.2 893.6 3.2Z M893.2 11.6 Q893.5 13.2 895.1 13.5 Q893.5 13.8 893.2 15.4 Q892.9 13.8 891.3 13.5 Q892.9 13.2 893.2 11.6Z" fill="#e4ebed"/><rect x="1015.2" y="4.3" width="10.8" height="10.5" fill="#f4f2ef"/><path d="M1018.2 14.8 Q1017.2 9.5 1018.6 7.2 Q1019.6 5.2 1020.9 5.2 Q1022.4 5.2 1023.2 7.2 Q1024.4 9.8 1023.6 14.8Z" fill="#4a3a34"/><ellipse cx="1020.8" cy="8.6" rx="1.5" ry="1.9" fill="#e2bfa6"/><path d="M1017 14.8 Q1017.6 12 1020.8 11.6 Q1024 12 1024.8 14.8Z" fill="#3b3535"/></svg>
<span class="t" style="top:6px;font-size:8.4px;color:#f3f6f7;letter-spacing:-0.139px;left:42.70px;">Openstream</span>
<span class="t" style="top:6px;font-size:8.4px;color:#f3f6f7;letter-spacing:-0.450px;left:114.00px;">14</span>
<span class="t" style="top:6px;font-size:8.4px;color:#b4c4ca;left:149.40px;">0</span>
<span class="t" style="top:6px;font-size:8.4px;color:#f3f6f7;letter-spacing:-0.450px;left:178.00px;">Neu</span>
<span class="t" style="top:6px;font-size:8.4px;color:#f3f6f7;letter-spacing:-0.394px;left:220.70px;">Rank Math SEO</span>
<span class="t" style="top:6px;font-size:8.4px;color:#f3f6f7;letter-spacing:-0.078px;left:905.80px;">Willkommen, Marianne Jehle</span>
</div>

</body>
</html>
